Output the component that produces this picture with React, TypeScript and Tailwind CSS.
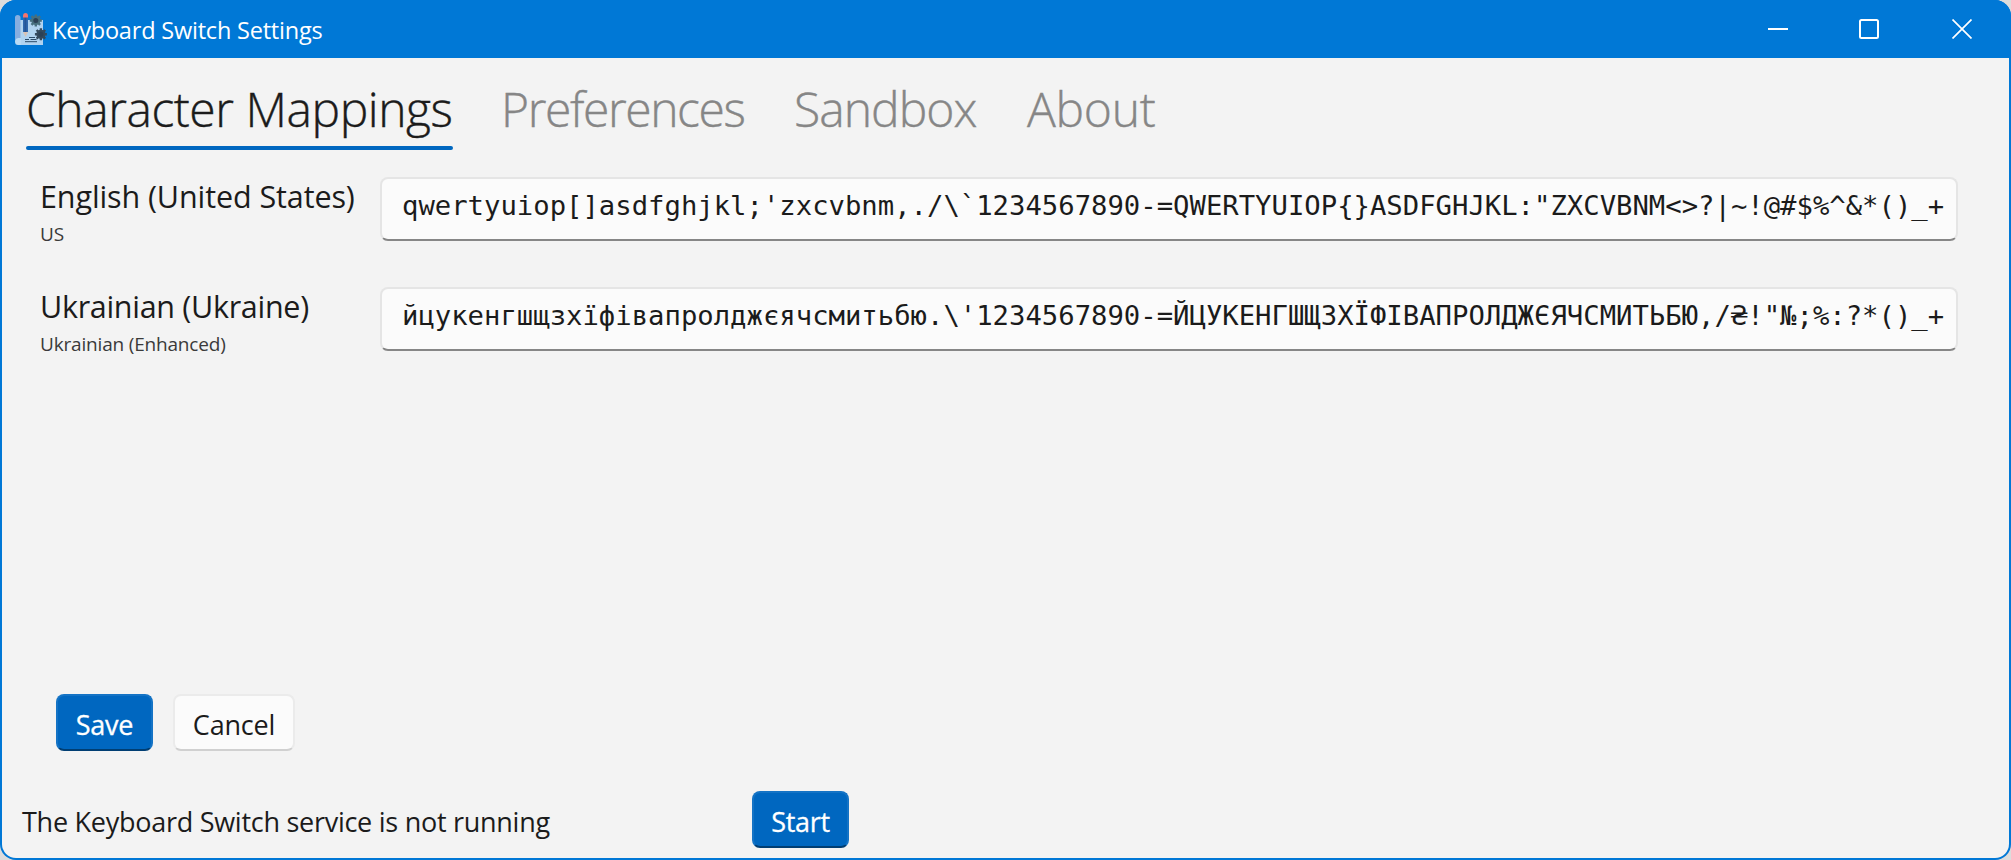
import React from "react";

const mappings = [
  {
    language: "English (United States)",
    layout: "US",
    characters:
      "qwertyuiop[]asdfghjkl;'zxcvbnm,./\\`1234567890-=QWERTYUIOP{}ASDFGHJKL:\"ZXCVBNM<>?|~!@#$%^&*()_+",
    nameClass: "tracking-[-0.1px]",
  },
  {
    language: "Ukrainian (Ukraine)",
    layout: "Ukrainian (Enhanced)",
    characters:
      "йцукенгшщзхїфівапролджєячсмитьбю.\\'1234567890-=ЙЦУКЕНГШЩЗХЇФІВАПРОЛДЖЄЯЧСМИТЬБЮ,/₴!\"№;%:?*()_+",
    nameClass: "tracking-[-0.3px]",
  },
];

function Gear({ cx, cy, color }: { cx: number; cy: number; color: string }) {
  return (
    <g transform={`translate(${cx} ${cy})`}>
      <path
        d="M0-6V6M-6 0H6M-4.300-4.300L4.300 4.300M4.300-4.300L-4.300 4.300"
        stroke={color}
        strokeWidth="2.400"
      />
      <circle r="4.600" fill={color} />
      <circle r="2.500" fill="#2b4157" />
    </g>
  );
}

function AppIcon() {
  return (
    <svg width="32" height="32" viewBox="0 0 32 32" className="shrink-0">
      <path d="M5 7h23v25H3V7z" fill="#b0d3f0" />
      <path d="M0 4.5Q0 2 2.7 2T5.5 4.5V25H2.5Q0 26 0 28z" fill="#86aee0" />
      <path d="M0 28.5Q0 25 3 25h3v7H3Q0 32 0 28.500z" fill="#b9daf4" />
      <path d="M8 4h5v15H8z" fill="#2f68ae" />
      <path d="M9.500 4h1.800v15H9.500z" fill="#245596" />
      <path d="M8 19h5l-2.500 5z" fill="#d9c3b5" />
      <path d="M8 3Q8 0 10.500 0T13 3v1.500H8z" fill="#f5746c" />
      <path d="M14 24.500h6M10 26.500h4M15.500 26.500h6M10 28.700h12" stroke="#2b4a68" strokeWidth="1" />
      <Gear cx={20.8} cy={7.5} color="#476f7e" />
      <Gear cx={25.9} cy={21.300} color="#34495c" />
    </svg>
  );
}

function TitleBar() {
  return (
    <header className="flex h-[58px] shrink-0 items-center bg-[#0078d6] pl-[15px] pr-[39px] text-white">
      <AppIcon />
      <h1 className="ml-[5px] mt-[2px] whitespace-nowrap text-[23.5px] leading-[32px] tracking-[-0.2px]">Keyboard Switch Settings</h1>
      <div className="ml-auto flex items-center gap-[71px]">
        <svg width="20" height="20" viewBox="0 0 20 20">
          <path d="M0 10h20" stroke="white" strokeWidth="2" />
        </svg>
        <svg width="20" height="20" viewBox="0 0 20 20">
          <rect x="1" y="1" width="18" height="18" rx="1.500" fill="none" stroke="white" strokeWidth="2" />
        </svg>
        <svg width="20" height="20" viewBox="0 0 20 20" className="ml-[2px]">
          <path d="M0.500 0.500l19 19M19.500 0.500l-19 19" stroke="white" strokeWidth="1.700" />
        </svg>
      </div>
    </header>
  );
}

function Tabs() {
  return (
    <nav className="flex h-[92px] shrink-0 items-start pl-[24px] pt-[19px] text-[48px] font-light leading-[64px] text-[#868686] [-webkit-text-stroke:0.4px]">
      <div className="h-[73px] w-[427px] shrink-0 whitespace-nowrap text-[#1b1b1b]">
        <div className="h-[69px] tracking-[-0.45px]">Character Mappings</div>
        <div className="h-1 rounded-full bg-[#0067c0]" />
      </div>
      <div className="ml-[48px] w-[246px] shrink-0 whitespace-nowrap tracking-[-1.4px]">Preferences</div>
      <div className="ml-[47px] w-[186px] shrink-0 whitespace-nowrap tracking-[-0.95px]">Sandbox</div>
      <div className="ml-[47px] w-[136px] shrink-0 whitespace-nowrap tracking-[-0.3px]">About</div>
    </nav>
  );
}

function MappingRow({ row }: { row: (typeof mappings)[number] }) {
  return (
    <div className="flex h-[64px]">
      <div className="w-[340px] shrink-0 whitespace-nowrap">
        <div className={`-mt-px h-[40px] text-[30.5px] leading-[40px] ${row.nameClass}`}>{row.language}</div>
        <div className="mt-[5px] text-[19px] leading-[26px] tracking-[-0.18px] text-[#3a3a3a]">{row.layout}</div>
      </div>
      <div className="h-[64px] w-[1578px] overflow-hidden whitespace-pre rounded-[8px] border-2 border-[#e5e5e5] border-b-[#868686] bg-[#fbfbfb] pl-[20px] pt-[7px] font-['DejaVu_Sans_Mono',monospace] text-[27.25px] leading-[40px]">
        {row.characters}
      </div>
    </div>
  );
}

function Button({ primary, children, className }: { primary?: boolean; children: React.ReactNode; className: string }) {
  const look = primary
    ? "border-[#1473c5] border-b-[#003e73] bg-[#0067c0] text-white"
    : "border-[#ebebeb] border-b-[#d0d0d0] bg-[#fbfbfb]";
  return (
    <button className={`flex h-[57px] shrink-0 items-center justify-center whitespace-nowrap rounded-[8px] border-2 pt-[3px] text-[27px] leading-none ${look} ${className}`}>
      {children}
    </button>
  );
}

export default function App() {
  return (
    <div className="h-[860px] w-[2011px] bg-[#dcdcdc] font-['Open_Sans','Noto_Sans',sans-serif] text-[#1b1b1b]">
      <div className="flex h-full flex-col overflow-hidden rounded-[16px] bg-[#0078d6]">
        <TitleBar />
        <div className="mx-[2px] mb-[2px] flex flex-1 flex-col rounded-b-[14px] bg-[#f3f3f3]">
          <Tabs />
          <main className="flex flex-col gap-[46px] pl-[38px] pt-[27px]">
            {mappings.map((row) => (
              <MappingRow key={row.language} row={row} />
            ))}
          </main>
          <div className="mt-auto flex gap-[20px] pl-[54px]">
            <Button primary className="w-[97px] tracking-[-0.3px] [-webkit-text-stroke:0.3px]">Save</Button>
            <Button className="w-[122px] tracking-[-0.2px]">Cancel</Button>
          </div>
          <footer className="mb-[10px] mt-[40px] flex items-center pl-[20px]">
            <span className="w-[730px] whitespace-nowrap pt-[4px] text-[27px] leading-[40px] tracking-[-0.27px]">The Keyboard Switch service is not running</span>
            <Button primary className="w-[97px] tracking-[-0.3px] [-webkit-text-stroke:0.3px]">Start</Button>
          </footer>
        </div>
      </div>
    </div>
  );
}
